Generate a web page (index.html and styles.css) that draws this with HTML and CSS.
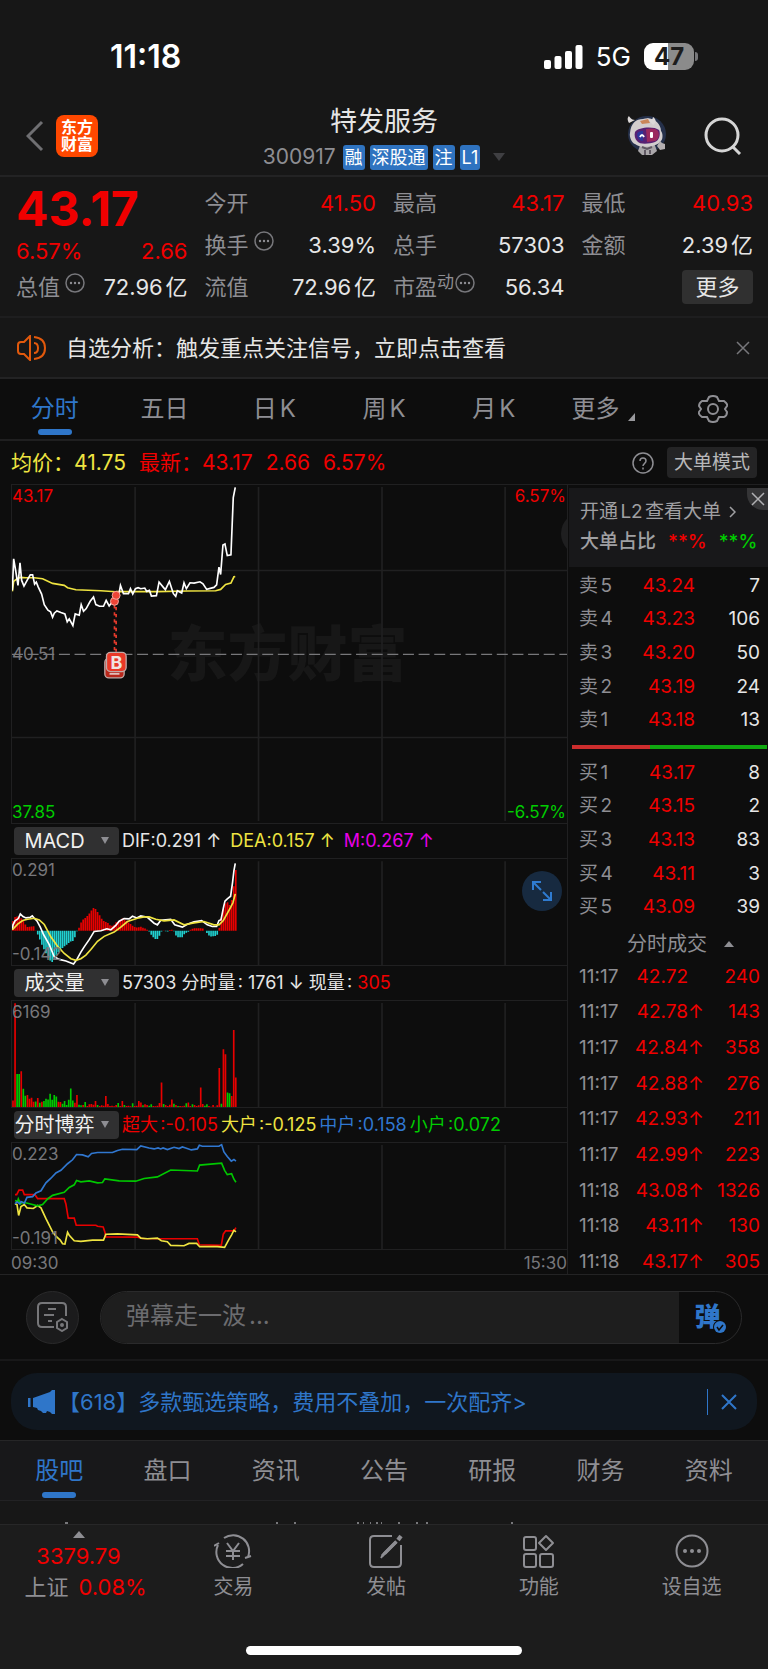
FILE: index.html
```html
<!DOCTYPE html>
<html lang="zh-CN">
<head>
<meta charset="utf-8">
<meta name="viewport" content="width=device-width, initial-scale=1">
<title>特发服务 300917</title>
<link rel="stylesheet" href="styles.css">
</head>
<body>
<header class="top">
  <div class="status">
    <span class="clock">11:18</span>
    <div class="status-right">
      <svg width="39" height="24" viewBox="0 0 39 24" fill="#fff"><rect x="0" y="15" width="7" height="9" rx="2"/><rect x="10.500" y="11" width="7" height="13" rx="2"/><rect x="21" y="6" width="7" height="18" rx="2"/><rect x="31.500" y="0" width="7" height="24" rx="2"/></svg>
      <span class="net">5G</span>
      <span class="battery"><span class="cell">47</span><span class="tip"></span></span>
    </div>
  </div>
  <div class="titlebar">
    <div class="left">
      <button class="plain" aria-label="返回"><svg width="18" height="32" viewBox="0 0 18 32" fill="none" stroke="#6f6f72" stroke-width="3"><path d="M16 2 2 16l14 14"/></svg></button>
      <div class="logo"><span>东方</span><span>财富</span></div>
    </div>
    <div class="name">
      <h1>特发服务</h1>
      <div class="code"><span class="num">300917</span><span class="tag">融</span><span class="tag">深股通</span><span class="tag">注</span><span class="tag">L1</span><svg class="drop" width="12" height="8" viewBox="0 0 12 8"><path d="M0 0h12L6 8z" fill="#3f3f42"/></svg></div>
    </div>
    <div class="right">
      <button class="plain" aria-label="智能助手">
        <svg width="42" height="42" viewBox="0 0 42 42"><ellipse cx="21" cy="19" rx="19" ry="18" fill="#25304a"/><path d="M15 28h13l3 8-5 4H16l-4-4z" fill="#aaa7aa"/><path d="M4 18C5 8 10 4 17 4c9-3 18 4 18 12 2 2 2 8 0 10-4 6-20 8-26 3-3-1-6-7-5-11z" fill="#d2cdce"/><path d="M3 8c-3-5 0-7 0-7s2 4 6 4zM21 3c3 1 5 4 6-1 4 3 3 6 0 8z" fill="#dcd8d8"/><path d="M14 6l8-2 2 4-8 1z" fill="#c98559"/><path d="M9 17c3-5 19-6 24-2 2 4 0 11-4 12-6 2-15 3-18-1-2-2-3-6-2-9z" fill="#572173"/><path d="M20 14c5-1 10-1 12 2 2 4 0 9-3 10l-8 1z" fill="#9b285f"/><path d="M11 19c1-3 4-3 6-3v10c-4 0-6-3-6-7z" fill="#2f349a"/><path d="M14 22q2-4 4 0" stroke="#fff" stroke-width="2" fill="none"/><rect x="24" y="17" width="3" height="6" rx="1" fill="#fff"/><path d="M34 26l2 2 3 1v5l-5 1-3-4z" fill="#b4afb0"/><path d="M16 32l5 2 5-2M19 35v5M24 35v4" stroke="#605963" stroke-width="2" fill="none"/></svg>
      </button>
      <button class="plain" aria-label="搜索"><svg width="38" height="38" viewBox="0 0 38 38" fill="none" stroke="#d5d5d5" stroke-width="3"><circle cx="18" cy="18" r="16"/><path d="m28 29 8 8"/></svg></button>
    </div>
  </div>
</header>

<section class="quote">
  <div class="qcol">
    <div class="price">43.17</div>
    <div class="cell-row change red"><span>6.57%</span><span>2.66</span></div>
    <div class="cell-row"><span class="lab">总值<svg class="hint"><use href="#dots"/></svg></span><span>72.96亿</span></div>
  </div>
  <div class="qcol">
    <div class="cell-row"><span class="lab">今开</span><span class="red">41.50</span></div>
    <div class="cell-row"><span class="lab">换手<svg class="hint"><use href="#dots"/></svg></span><span>3.39%</span></div>
    <div class="cell-row"><span class="lab">流值</span><span>72.96亿</span></div>
  </div>
  <div class="qcol">
    <div class="cell-row"><span class="lab">最高</span><span class="red">43.17</span></div>
    <div class="cell-row"><span class="lab">总手</span><span>57303</span></div>
    <div class="cell-row"><span class="lab">市盈<span class="sup">动</span><svg class="hint tight"><use href="#dots"/></svg></span><span>56.34</span></div>
  </div>
  <div class="qcol">
    <div class="cell-row"><span class="lab">最低</span><span class="red">40.93</span></div>
    <div class="cell-row"><span class="lab">金额</span><span>2.39亿</span></div>
    <div class="cell-row end"><button class="more">更多</button></div>
  </div>
</section>

<section class="notice">
  <svg width="31" height="26" viewBox="0 0 31 26" fill="none" stroke="#e2590c" stroke-width="2"><path d="M1 10q0-3 3-3h3l6-6v24l-6-6H4q-3 0-3-3z"/><path d="M17 8q4 0 4 5t-4 5M17 2q11 1 11 11T17 24"/></svg>
  <p>自选分析：触发重点关注信号，立即点击查看</p>
  <button class="plain" aria-label="关闭"><svg width="14" height="14" viewBox="0 0 14 14" stroke="#77777b" stroke-width="1.500"><path d="m1 1 12 12M13 1 1 13"/></svg></button>
</section>

<nav class="tabs periods">
  <button class="on">分时</button><button>五日</button><button>日K</button><button>周K</button><button>月K</button>
  <button>更多<svg class="corner" width="7" height="8" viewBox="0 0 7 8"><path d="M7 0v8H0z" fill="#99999d"/></svg></button>
  <button aria-label="设置"><svg width="30" height="28" viewBox="0 0 30 28" fill="none" stroke="#8e8e93" stroke-width="2"><path d="M11 2q4-2 8 0l2 4 5 0q4 3 3 5l-2 3 2 3q0 4-3 5l-5 0-2 4q-4 2-8 0l-2-4-5 0Q0 19 1 17l2-3-2-3q0-3 3-5l5 0z"/><circle cx="15" cy="14" r="5"/></svg></button>
</nav>

<div class="inforow">
  <span class="yellow">均价：41.75</span>
  <span class="red">最新：43.17</span><span class="red">2.66</span><span class="red">6.57%</span>
  <button class="plain push" aria-label="帮助"><svg width="22" height="22" viewBox="0 0 22 22" fill="none" stroke="#8e8e93" stroke-width="1.500"><circle cx="11" cy="11" r="10"/><path d="M8 9q0-3 3-3t3 3q0 1-1.500 2.500T11 14M11 15.500v2"/></svg></button>
  <button class="mode">大单模式</button>
</div>

<main class="market">
  <div class="charts">
    <div class="chart main-chart">
      <span class="watermark">东方财富</span>
      <svg class="plot" viewBox="33 27 1668 1020" preserveAspectRatio="none" fill="none">
        <path d="M403 33V1041M774 33V1041M1145 33V1041M1515 33V1041M33 285H1701M33 789H1701" stroke="#202021" stroke-width="5"/>
        <path d="M33 538H1701" stroke="#77777a" stroke-width="4" stroke-dasharray="33 14"/>
        <circle cx="1749" cy="174" r="66" fill="#1f1f20"/>
        <path d="M34 348 38 318 48 310 58 306 75 307 100 307 125 310 155 324 190 330 200 337 225 343 300 346 345 349 470 349 560 347 645 346 660 342 675 327 691 323 700 304 704 303" stroke="#efe441" stroke-width="5"/>
        <path d="M34 345 38 250 44 285 51 330 57 262 62 315 69 332 80 312 88 298 95 298 101 326 106 320 112 335 122 356 130 388 141 405 149 410 155 426 160 414 168 407 180 412 192 416 199 440 205 431 216 451 223 416 235 420 241 388 248 408 256 400 268 378 278 365 285 388 296 393 308 393 316 375 325 392 334 380 345 364 354 358 359 330 368 355 383 355 389 340 396 356 404 340 412 337 420 340 432 338 438 348 446 345 452 362 467 361 475 320 488 336 494 343 506 318 518 355 525 363 530 346 543 353 550 322 557 340 568 322 580 323 598 319 607 325 618 342 640 336 648 328 655 275 660 297 667 208 673 205 680 240 691 238 698 65 704 34" stroke="#fff" stroke-width="5"/>
        <path d="M341 390V530M346 374V530" stroke="#e33a2c" stroke-width="5" stroke-dasharray="10 11"/>
        <g fill="#ee4436" stroke="#f2a79f" stroke-width="3"><circle cx="341" cy="378" r="12"/><circle cx="346" cy="360" r="12"/></g>
        <g stroke="#c0a9a6" stroke-width="4"><rect x="312" y="550" width="58" height="59" rx="12" fill="#b8271b"/><rect x="317" y="532" width="59" height="58" rx="12" fill="#e93827"/></g>
        <path d="M326 597h30" stroke="#e6c8c4" stroke-width="5"/>
      </svg>
      <span class="mark">B</span>
      <span class="l tl red">43.17</span><span class="l tr red">6.57%</span><span class="l ml">40.51</span><span class="l bl green">37.85</span><span class="l br green">-6.57%</span>
    </div>

    <div class="ind">
      <span class="pick"><select aria-label="指标一"><option>MACD</option></select><svg width="8" height="7" viewBox="0 0 8 7"><path d="M0 0h8L4 7z" fill="#8e8e93"/></svg></span>
      <span>DIF:0.291 ↑</span><span class="yellow gap">DEA:0.157 ↑</span><span class="magenta gap">M:0.267 ↑</span>
    </div>
    <div class="chart sub">
      <svg class="plot" viewBox="33 115 1668 322" preserveAspectRatio="none" fill="none">
        <path d="M403 122V437M774 122V437M1145 122V437M1515 122V437" stroke="#202021" stroke-width="5"/>
        <path id="macd-up" stroke="#e80000" stroke-width="5"/><path id="macd-down" stroke="#20d0d0" stroke-width="5"/>
        <path d="M34 330 36 315 42 303 52 296 58 282 66 290 75 294 88 292 94 288 100 295 108 303 118 322 128 345 145 375 160 412 175 420 195 425 218 434 228 420 240 398 250 382 265 360 280 335 300 333 318 327 330 330 345 317 355 304 370 296 385 297 395 289 408 294 420 288 440 292 460 310 470 315 480 301 510 298 522 315 545 322 560 313 580 306 603 302 620 315 635 320 648 320 655 302 661 300 668 265 673 243 680 236 690 228 696 185 700 150 704 128" stroke="#fff" stroke-width="5"/>
        <path d="M34 330 50 313 65 302 80 298 100 295 115 300 130 314 150 352 170 380 190 402 210 418 225 423 240 418 255 407 270 390 290 365 310 350 340 337 360 322 380 305 410 295 430 291 445 291 465 298 490 303 520 300 550 315 580 309 610 305 640 315 655 315 668 302 680 280 690 262 697 248 704 221" stroke="#efe441" stroke-width="5"/>
      </svg>
      <span class="l tl">0.291</span><span class="l bl">-0.142</span>
      <button class="expand" aria-label="全屏"><svg width="20" height="20" viewBox="0 0 20 20" fill="none" stroke="#2f7bd0" stroke-width="2"><path d="M1 9V1h8M1 1l8 8M19 11v8h-8M19 19l-8-8"/></svg></button>
    </div>

    <div class="ind">
      <span class="pick"><select aria-label="指标二"><option>成交量</option></select><svg width="8" height="7" viewBox="0 0 8 7"><path d="M0 0h8L4 7z" fill="#8e8e93"/></svg></span>
      <span>57303 分时量: 1761 ↓ 现量: <span class="red">305</span></span>
    </div>
    <div class="chart sub">
      <svg class="plot" viewBox="33 540 1668 321" preserveAspectRatio="none" fill="none">
        <path d="M403 546V861M774 546V861M1145 546V861M1515 546V861" stroke="#202021" stroke-width="5"/>
        <path id="vol-up" stroke="#e80000" stroke-width="5"/><path id="vol-down" stroke="#00c800" stroke-width="5"/>
      </svg>
      <span class="l tl">6169</span>
    </div>

    <div class="ind">
      <span class="pick"><select aria-label="指标三"><option>分时博弈</option></select><svg width="8" height="7" viewBox="0 0 8 7"><path d="M0 0h8L4 7z" fill="#8e8e93"/></svg></span>
      <span class="red">超大:-0.105</span><span class="yellow near">大户:-0.125</span><span class="blue near">中户:0.158</span><span class="green near">小户:0.072</span>
    </div>
    <div class="chart sub">
      <svg class="plot" viewBox="33 125 1668 322" preserveAspectRatio="none" fill="none" stroke-width="5">
        <path d="M403 131V447M774 131V447M1145 131V447M1515 131V447" stroke="#202021"/>
        <path d="M42 282 47 282 54 268 65 268 70 282 102 282 110 294 190 294 195 310 202 353 220 353 226 375 285 375 290 378 307 380 312 395 315 410 410 411 425 415 490 416 590 416 596 434 662 436 668 402 675 392 700 392 706 382" stroke="#e80000"/>
        <path d="M42 310 48 312 53 345 60 318 70 312 78 322 97 324 110 315 120 322 135 355 155 395 165 408 178 420 185 431 192 432 200 396 205 405 220 422 240 424 275 420 308 420 315 402 350 401 410 404 420 414 440 416 470 414 482 422 500 425 510 436 550 437 565 430 588 430 597 440 650 440 672 442 685 418 693 404 700 390 706 395" stroke="#efe441"/>
        <path d="M42 300 50 302 52 295 58 310 65 305 80 308 110 316 125 312 140 295 155 284 190 275 205 260 220 252 227 239 240 243 265 240 290 246 305 245 312 234 355 240 405 241 430 233 470 228 510 207 590 210 597 192 630 189 663 186 672 208 680 221 693 218 700 235 706 244" stroke="#00c800"/>
        <path d="M42 310 48 304 56 310 60 303 70 308 78 290 95 288 105 277 120 270 135 246 150 232 165 216 180 208 200 188 215 176 227 160 245 161 262 167 272 157 290 154 335 154 350 148 365 144 408 145 420 134 445 140 460 143 472 140 480 143 487 140 500 145 520 138 535 142 545 137 555 140 572 146 590 143 596 132 605 135 655 135 663 130 670 152 680 166 692 180 700 175 706 180" stroke="#3077d0"/>
      </svg>
      <span class="l tl">0.223</span><span class="l bl">-0.191</span>
    </div>
    <div class="times"><span>09:30</span><span>15:30</span></div>
  </div>

  <aside class="book">
    <div class="promo">
      <a href="#l2">开通L2查看大单<svg width="7" height="12" viewBox="0 0 7 12" fill="none" stroke="#a0a0a3" stroke-width="1.500"><path d="m1 1 5 5-5 5"/></svg></a>
      <p>大单占比<b class="red">**%</b><b class="green">**%</b></p>
      <button class="shut" aria-label="关闭"><svg width="14" height="14" viewBox="0 0 14 14" stroke="#b0b0b3" stroke-width="1.500"><path d="m1 1 12 12M13 1 1 13"/></svg></button>
    </div>
    <table class="levels">
      <tr><th>卖5</th><td class="red">43.24</td><td>7</td></tr>
      <tr><th>卖4</th><td class="red">43.23</td><td>106</td></tr>
      <tr><th>卖3</th><td class="red">43.20</td><td>50</td></tr>
      <tr><th>卖2</th><td class="red">43.19</td><td>24</td></tr>
      <tr><th>卖1</th><td class="red">43.18</td><td>13</td></tr>
    </table>
    <div class="ratio"></div>
    <table class="levels">
      <tr><th>买1</th><td class="red">43.17</td><td>8</td></tr>
      <tr><th>买2</th><td class="red">43.15</td><td>2</td></tr>
      <tr><th>买3</th><td class="red">43.13</td><td>83</td></tr>
      <tr><th>买4</th><td class="red">43.11</td><td>3</td></tr>
      <tr><th>买5</th><td class="red">43.09</td><td>39</td></tr>
    </table>
    <button class="deals-head">分时成交<svg width="10" height="6" viewBox="0 0 10 6"><path d="M0 6h10L5 0z" fill="#8e8e93"/></svg></button>
    <table class="deals">
      <tr><th>11:17</th><td>42.72</td><td class="ar"></td><td>240</td></tr>
      <tr><th>11:17</th><td>42.78</td><td class="ar">↑</td><td>143</td></tr>
      <tr><th>11:17</th><td>42.84</td><td class="ar">↑</td><td>358</td></tr>
      <tr><th>11:17</th><td>42.88</td><td class="ar">↑</td><td>276</td></tr>
      <tr><th>11:17</th><td>42.93</td><td class="ar">↑</td><td>211</td></tr>
      <tr><th>11:17</th><td>42.99</td><td class="ar">↑</td><td>223</td></tr>
      <tr><th>11:18</th><td>43.08</td><td class="ar">↑</td><td>1326</td></tr>
      <tr><th>11:18</th><td>43.11</td><td class="ar">↑</td><td>130</td></tr>
      <tr><th>11:18</th><td>43.17</td><td class="ar">↑</td><td>305</td></tr>
    </table>
  </aside>
</main>

<section class="danmu">
  <button class="round" aria-label="弹幕设置"><svg width="32" height="30" viewBox="0 0 32 30" fill="none" stroke="#77777a" stroke-width="2"><path d="M17 25H5q-4 0-4-4V5q0-4 4-4h20q4 0 4 4v9M11 7h8M7 13h10M11 19h4"/><path d="m25 17 5 3v6l-5 3-5-3v-6z"/><circle cx="25" cy="23" r="1"/></svg></button>
  <div class="pill">
    <input type="text" aria-label="弹幕" placeholder="弹幕走一波...">
    <button class="dan" aria-label="弹幕开关">弹<svg width="14" height="14" viewBox="0 0 14 14"><circle cx="7" cy="7" r="7" fill="#0d0d0d"/><circle cx="7" cy="7" r="6" fill="#2f76c9"/><path d="m4 7 2 3 4-5" fill="none" stroke="#0d0d0d" stroke-width="1.500"/></svg></button>
  </div>
</section>

<section class="banner-wrap">
  <div class="banner">
    <svg width="27" height="24" viewBox="0 0 27 24" fill="#2f76c9"><path d="M0 8h2.500v9H0zM5 8 22 2 24 0h3v24h-3l-2-2-3-1-1 2h-3l-2-2-3-1-1-2-4-1z"/></svg>
    <a href="#618">【618】多款甄选策略，费用不叠加，一次配齐&gt;</a>
    <span class="bar"></span>
    <button class="plain" aria-label="关闭"><svg width="16" height="16" viewBox="0 0 16 16" stroke="#2f76c9" stroke-width="2"><path d="m1 1 14 14M15 1 1 15"/></svg></button>
  </div>
</section>

<nav class="tabs sections">
  <button class="on">股吧</button><button>盘口</button><button>资讯</button><button>公告</button><button>研报</button><button>财务</button><button>资料</button>
</nav>
<div class="feed"><svg width="100%" height="2" viewBox="0 0 768 2" stroke="#77777a" stroke-width="2"><path d="M65 1h3M276 1h2M294 1h2M357 1h2M363 1h1M370 1h1M376 1h2M381 1h1M398 1h2M416 1h2M426 1h2M511 1h2"/></svg></div>

<footer>
  <nav class="dock">
    <button class="index"><svg width="12" height="7" viewBox="0 0 12 7"><path d="M0 7h12L6 0z" fill="#8e8e93"/></svg><span class="red">3379.79</span><span class="sh">上证<span class="red">0.08%</span></span></button>
    <button><svg width="38" height="34" viewBox="0 0 38 34" fill="none" stroke="#8e8e93" stroke-width="2"><path d="M10 4A16 16 0 0 1 34 23M31 24l6-2M4 11A16 16 0 0 0 29 30M0 12l5-3"/><path d="m13 9 6 8 6-8M12 17h14M12 22h14M19 17v9"/></svg>交易</button>
    <button><svg width="34" height="34" viewBox="0 0 34 34" fill="none" stroke="#8e8e93" stroke-width="2"><path d="M23 2H5Q1 2 1 6v23q0 4 4 4h23q4 0 4-4V11"/><path d="M27 7 15 19l-3 5M28 8 16 20" /><path d="m13 22 14-14" stroke-width="3"/><path d="m29 6 3-4" stroke-width="4"/></svg>发帖</button>
    <button><svg width="32" height="34" viewBox="0 0 32 34" fill="none" stroke="#8e8e93" stroke-width="2"><rect x="1" y="3" width="12" height="13" rx="2"/><rect x="1" y="20" width="12" height="13" rx="2"/><rect x="17" y="20" width="13" height="13" rx="2"/><path d="m23 2 7 7-7 7-7-7z" stroke-linejoin="round"/></svg>功能</button>
    <button><svg width="34" height="34" viewBox="0 0 34 34" fill="none" stroke="#8e8e93" stroke-width="2"><circle cx="17" cy="17" r="15.500"/><g fill="#8e8e93" stroke="none"><circle cx="10" cy="17" r="2"/><circle cx="17" cy="17" r="2"/><circle cx="24" cy="17" r="2"/></g></svg>设自选</button>
  </nav>
  <div class="home"></div>
</footer>

<svg class="defs"><symbol id="dots" viewBox="0 0 20 20"><circle cx="10" cy="10" r="9" fill="none" stroke="#77777b" stroke-width="1.500"/><g fill="#8e8e93"><circle cx="6" cy="10" r="1.200"/><circle cx="10" cy="10" r="1.200"/><circle cx="14" cy="10" r="1.200"/></g></symbol></svg>
<script src="chart.js"></script>
</body>
</html>
```
FILE: styles.css
```css
* { box-sizing: border-box; }
html { background: #0d0d0d; }
body { margin: 0; background: #0d0d0d; color: #e6e6e6; font-family: Inter, "Noto Sans CJK SC", sans-serif; font-size: 20px; line-height: 24px; text-autospace: normal; }
button, select, input { font: inherit; color: inherit; background: none; border: 0; padding: 0; margin: 0; border-radius: 0; }
a { color: inherit; text-decoration: none; }
p, h1 { margin: 0; }
svg { display: block; flex: none; }
.defs { width: 0; height: 0; position: absolute; }
.plain { display: flex; }
.red { color: #f00000; }
.green { color: #00cc00; }
.yellow { color: #efe441; }
.magenta { color: #e800e8; }
.blue { color: #3077d0; }

.top { background: #171717; border-bottom: 2px solid #232324; }
.status { height: 103px; padding: 10px 70px 0 110px; display: flex; align-items: center; justify-content: space-between; color: #fff; }
.clock { font-size: 32px; font-weight: 600; }
.status-right { display: flex; align-items: center; gap: 13px; }
.net { font-size: 26px; font-weight: 400; }
.battery { display: flex; align-items: center; gap: 1px; }
.cell { width: 50px; height: 27px; border-radius: 9px; background: linear-gradient(90deg, #fff 47%, #8b8b8b 47%); color: #1c1c1c; font-size: 24px; font-weight: 700; line-height: 27px; text-align: center; }
.tip { width: 3px; height: 9px; border-radius: 0 3px 3px 0; background: #77777a; }
.titlebar { height: 72px; padding: 0 26px; display: grid; grid-template-columns: 1fr auto 1fr; align-items: center; }
.left { display: flex; align-items: center; gap: 12px; padding-bottom: 6px; }
.logo { width: 42px; height: 42px; border-radius: 8px; background: #ff4800; color: #fff; display: flex; flex-direction: column; align-items: center; justify-content: center; font-size: 16px; line-height: 17px; font-weight: 700; }
.name h1 { font-size: 27px; line-height: 36px; font-weight: 400; text-align: center; }
.code { display: flex; align-items: center; gap: 5px; height: 34px; font-size: 18px; }
.num { color: #8e8e93; font-size: 21px; margin-right: 2px; }
.tag { background: #2f73c0; color: #fff; border-radius: 3px; padding: 0 2px; line-height: 25px; }
.drop { margin-left: 8px; }
.right { display: flex; justify-content: flex-end; align-items: center; gap: 36px; padding-bottom: 6px; }

.quote { background: #171717; padding: 5px 15px 8px 16px; display: grid; grid-template-columns: repeat(4, 1fr); gap: 17px; border-bottom: 2px solid #1e1e1f; font-size: 22px; }
.price { color: #f00000; font-size: 48px; font-weight: 700; line-height: 54px; height: 54px; }
.cell-row { height: 42px; display: flex; align-items: center; justify-content: space-between; white-space: nowrap; }
.change { height: 30px; }
.end { justify-content: flex-end; }
.lab { color: #8e8e93; display: flex; align-items: center; }
.hint { width: 20px; height: 20px; margin: 0 0 8px 5px; }
.tight { margin-left: 1px; }
.sup { font-size: 17px; margin-bottom: 10px; }
.more { width: 71px; height: 34px; border-radius: 4px; background: #303030; font-size: 22px; }

.notice { background: #171717; height: 61px; padding: 0 18px 0 17px; display: flex; align-items: center; gap: 18px; font-size: 22px; border-bottom: 2px solid #232324; }
.notice p { flex: 1; }

.tabs { display: grid; grid-template-columns: repeat(7, 1fr); color: #8e8e93; font-size: 24px; }
.tabs button { display: flex; align-items: center; justify-content: center; position: relative; }
.tabs .on { color: #2f76c9; }
.tabs .on::after { content: ""; position: absolute; bottom: 4px; width: 34px; height: 6px; border-radius: 3px; background: #2f76c9; }
.periods { height: 62px; border-bottom: 2px solid #1f1f20; }
.corner { margin: 16px 0 0 9px; }
.sections { height: 61px; padding: 0 5px; background: #18181a; border-top: 1px solid #262627; border-bottom: 1px solid #222224; }
.sections .on::after { bottom: 2px; }

.inforow { height: 43px; padding: 0 11px; display: flex; align-items: center; gap: 13px; font-size: 21px; white-space: nowrap; }
.push { margin-left: auto; }
.mode { width: 90px; height: 31px; border-radius: 4px; background: #242425; color: #b8b8ba; font-size: 19px; }

.market { display: grid; grid-template-columns: 1fr 200px; border-bottom: 1px solid #232324; }
.charts { padding-left: 11px; border-right: 1px solid #202021; min-width: 0; }
.chart { position: relative; border: 1px solid #202021; border-width: 1px 0 1px 1px; overflow: hidden; }
.plot { position: relative; width: 100%; height: 100%; }
.main-chart { height: 340px; }
.sub { height: 108px; }
.watermark { position: absolute; left: 28%; top: 134px; font-size: 60px; line-height: 70px; font-weight: 900; color: #171717; }
.l { position: absolute; font-size: 17px; line-height: 20px; color: #77777b; }
.l.red { color: #f00000; }
.l.green { color: #00cc00; }
.tl { left: 0; top: 1px; }
.tr { right: 1px; top: 1px; }
.ml { left: 0; top: 159px; }
.bl { left: 0; bottom: 1px; }
.br { right: 1px; bottom: 1px; }
.mark { position: absolute; left: 96px; top: 168px; width: 17px; text-align: center; font-size: 18px; line-height: 20px; font-weight: 700; color: #f0e4e2; }
.ind { height: 34px; padding-left: 3px; display: flex; align-items: center; font-size: 18px; white-space: nowrap; }
.pick { position: relative; margin-right: 3px; }
.pick select { display: block; appearance: none; width: 105px; height: 28px; padding-right: 24px; border-radius: 4px; background: #303031; color: #f0f0f0; font-size: 20px; text-align: center; text-align-last: center; }
.pick svg { position: absolute; right: 10px; top: 10px; pointer-events: none; }
.gap { margin-left: 9px; }
.near { margin-left: 3px; }
.expand { position: absolute; right: 5px; top: 12px; width: 40px; height: 40px; border-radius: 50%; background: #172a40; display: flex; align-items: center; justify-content: center; }
.times { height: 24px; display: flex; justify-content: space-between; color: #77777b; font-size: 17px; line-height: 27px; }

.book { border-top: 1px solid #202021; overflow: hidden; }
.promo { position: relative; height: 79px; margin: 3px 0 2px 1px; padding: 9px 0 0 11px; background: #18181a; color: #a0a0a3; font-size: 19px; line-height: 30px; overflow: hidden; white-space: nowrap; }
.promo a { display: flex; align-items: center; gap: 8px; }
.promo p { display: flex; font-weight: 500; }
.promo b { font-weight: 500; margin-left: 12px; }
.shut { position: absolute; right: 0; top: 0; width: 21px; height: 22px; border-bottom-left-radius: 16px; background: #353537; display: flex; align-items: center; justify-content: center; }
table { border-collapse: collapse; table-layout: fixed; width: 100%; }
th, td { padding: 0; font-weight: 400; text-align: right; }
th { width: 52px; padding-left: 11px; text-align: left; color: #8e8e93; white-space: nowrap; }
.levels { height: 168px; font-size: 19px; }
.levels td:nth-child(2) { width: 75px; }
.levels td:last-child { padding-right: 8px; }
.ratio { height: 4px; margin: 8px 1px 7px 4px; background: linear-gradient(90deg, #cc2d2d 40%, #10a810 40%); }
.deals-head { width: 100%; height: 35px; display: flex; align-items: center; justify-content: center; gap: 17px; color: #8e8e93; padding: 5px 0 0 25px; font-size: 20px; }
.deals { height: 321px; margin-bottom: -8px; font-size: 19px; color: #f00000; }
.deals th { width: 60px; }
.deals td:nth-child(2) { width: 60px; }
.deals .ar { width: 15px; text-align: left; }
.deals td:last-child { padding-right: 8px; }

.danmu { height: 86px; padding: 0 26px; display: flex; align-items: center; gap: 21px; border-bottom: 2px solid #181819; }
.round { width: 53px; height: 53px; border-radius: 50%; background: #1b1b1c; border: 1px solid #2a2a2b; display: flex; align-items: center; justify-content: center; }
.pill { flex: 1; height: 53px; border: 1px solid #2a2a2b; border-radius: 27px; display: flex; overflow: hidden; }
.pill input { flex: 1; min-width: 0; background: #1e1e1e; padding: 0 25px 4px; font-size: 24px; outline: 0; }
.pill input::placeholder { color: #6c6c6f; opacity: 1; }
.dan { width: 62px; color: #2f76c9; font-size: 26px; font-weight: 900; position: relative; padding-right: 5px; }
.dan svg { position: absolute; right: 14px; bottom: 9px; }

.banner-wrap { padding: 12px 11px 10px; }
.banner { height: 57px; border-radius: 26px; background: #10171f; color: #2f76c9; padding: 0 20px 0 17px; display: flex; align-items: center; font-size: 22px; white-space: nowrap; }
.banner a { flex: 1; margin-left: 3px; }
.bar { width: 1px; height: 26px; background: #2f76c9; margin-right: 13px; }

.feed { height: 23px; background: #171717; display: flex; align-items: flex-end; }
footer { background: #1c1c1c; border-top: 1px solid #272728; padding-bottom: 14px; }
.dock { display: grid; grid-template-columns: 157px repeat(4, 1fr); height: 121px; color: #8e8e93; font-size: 20px; align-items: start; }
.dock button { display: flex; flex-direction: column; align-items: center; gap: 7px; padding-top: 9px; }
.dock .index { gap: 5px; padding-top: 6px; font-size: 22px; line-height: 26px; white-space: nowrap; }
.sh { display: flex; gap: 10px; padding-left: 14px; }
.home { width: 36%; height: 9px; margin: 0 auto; border-radius: 5px; background: #fff; }
```
FILE: chart.js
```js
const STEP = 6.2;
const START = 36;
const COUNT = 109;

// Histogram turning points: x, height above the zero line.
const macd = [36,30,42,42,50,44,58,40,66,34,72,20,80,11,98,14,104,1,108,-6,116,-25,125,-48,135,-68,145,-88,155,-96,162,-82,172,-65,185,-52,198,-42,210,-32,220,-30,224,-10,230,2,236,12,243,32,252,38,262,48,272,62,280,72,288,60,296,48,305,32,312,28,320,25,330,14,338,16,345,26,355,28,365,38,375,32,385,24,395,16,405,9,420,12,435,6,445,-2,455,-18,465,-26,473,-24,480,-4,488,1,500,-3,510,4,518,2,524,-12,530,-20,545,-20,552,-8,562,-4,570,4,580,8,605,8,612,1,618,-6,628,-18,645,-16,652,-10,657,14,664,48,672,80,680,88,690,74,696,110,700,140,707,196];

function heightAt(x) {
  for (let i = 2; i < macd.length; i += 2) {
    if (x <= macd[i]) {
      const t = (x - macd[i - 2]) / (macd[i] - macd[i - 2]);
      return macd[i - 1] + t * (macd[i + 1] - macd[i - 1]);
    }
  }
  return macd[macd.length - 1];
}

function draw(id, bars, base) {
  document.getElementById(id).setAttribute("d", bars.map(([x, h]) => `M${x} ${base}V${base - h}`).join(""));
}

const xs = Array.from({ length: COUNT }, (_, i) => START + i * STEP);
const hist = xs.map((x) => [x, heightAt(x)]);
draw("macd-up", hist.filter((b) => b[1] > 0), 333);
draw("macd-down", hist.filter((b) => b[1] <= 0), 333);

// Volume per minute; negative values are falling minutes.
const volume = [20,314,-100,-100,108,-55,-34,36,25,28,16,-17,27,-13,16,-18,-25,-23,-40,-22,-36,-32,16,15,-10,-18,-6,-22,-56,-20,13,36,-7,-5,6,-15,3,8,9,7,18,-6,3,5,4,33,9,3,4,2,6,-12,3,18,-6,3,4,2,-11,3,4,18,14,-5,8,6,-4,-8,3,2,4,12,74,-9,6,3,7,23,-10,6,-3,3,2,4,-11,14,3,-8,6,3,5,59,9,-4,-8,3,1,6,1,5,118,-10,175,160,-44,-42,33,233,89];
const bars = volume.map((v, i) => [xs[i], v]);
draw("vol-up", bars.filter((b) => b[1] > 0), 861);
draw("vol-down", bars.filter((b) => b[1] < 0).map(([x, v]) => [x, -v]), 861);
```
